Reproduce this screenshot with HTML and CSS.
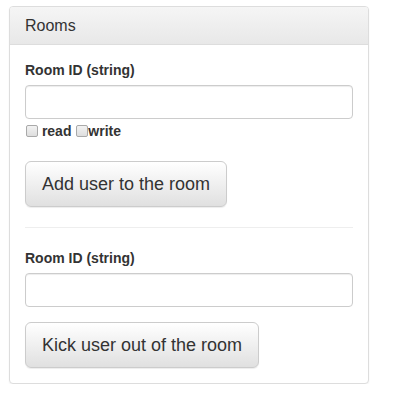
FILE: index.html
```html
<!DOCTYPE html>
<html>
<head>
<meta charset="utf-8">
<link rel="stylesheet" href="styles.css">
</head>
<body>
<div class="panel">
  <div class="panel-heading"><h3 class="panel-title">Rooms</h3></div>
  <div class="panel-body">
    <form class="section">
      <div class="form-group first">
        <label class="lbl">Room ID (string)</label>
        <input class="form-control" type="text">
        <div class="checks"><input type="checkbox" class="cb"> read <input type="checkbox" class="cb">write</div>
      </div>
      <button type="button" class="btn">Add user to the room</button>
    </form>
    <hr class="sep">
    <form class="section">
      <div class="form-group">
        <label class="lbl">Room ID (string)</label>
        <input class="form-control" type="text">
      </div>
      <button type="button" class="btn">Kick user out of the room</button>
    </form>
  </div>
</div>
</body>
</html>
```
FILE: styles.css
```css
* { box-sizing: border-box; }
body {
  margin: 0;
  padding: 6px 26px 0 9px;
  font-family: "Liberation Sans", Arial, sans-serif;
  font-size: 14px;
  line-height: 20px;
  color: #333;
  background: #fff;
}
.panel {
  width: 360px;
  border: 1px solid #ddd;
  border-radius: 4px;
  box-shadow: 0 1px 2px rgba(0,0,0,0.05);
  background: #fff;
}
.panel-heading {
  padding: 10px 15px;
  border-bottom: 1px solid #ddd;
  border-radius: 3px 3px 0 0;
  background: linear-gradient(to bottom, #f5f5f5 0%, #e8e8e8 100%);
}
.panel-title {
  margin: 0;
  font-size: 16px;
  font-weight: 500;
  line-height: 17px;
  color: #333;
}
.panel-body { padding: 15px; }
.form-group { margin-bottom: 15px; }
.form-group.first { margin-bottom: 20px; }
.lbl {
  display: inline-block;
  margin-bottom: 5px;
  font-weight: bold;
}
.form-control {
  display: block;
  width: 100%;
  height: 34px;
  padding: 6px 12px;
  font: inherit;
  border: 1px solid #ccc;
  border-radius: 4px;
  box-shadow: inset 0 1px 1px rgba(0,0,0,0.075);
  background: #fff;
}
.checks {
  margin-top: 2px;
  font-weight: bold;
  line-height: 20px;
  height: 20px;
}
.cb {
  -webkit-appearance: none;
  appearance: none;
  display: inline-block;
  width: 12px;
  height: 12px;
  margin: 0 0 0 1px;
  vertical-align: -1px;
  border: 1px solid #a9a9a9;
  border-radius: 2px;
  background: linear-gradient(to bottom, #f2f2f2 0%, #dedede 100%);
}
.btn {
  display: inline-block;
  padding: 10px 16px;
  font-family: inherit;
  font-size: 18px;
  line-height: 24px;
  color: #333;
  border: 1px solid #ccc;
  border-radius: 6px;
  background: linear-gradient(to bottom, #fff 0%, #e0e0e0 100%);
  box-shadow: inset 0 1px 0 rgba(255,255,255,0.15), 0 1px 1px rgba(0,0,0,0.075);
  cursor: pointer;
}
.sep {
  margin: 20px 0;
  border: 0;
  border-top: 1px solid #eee;
}
```
